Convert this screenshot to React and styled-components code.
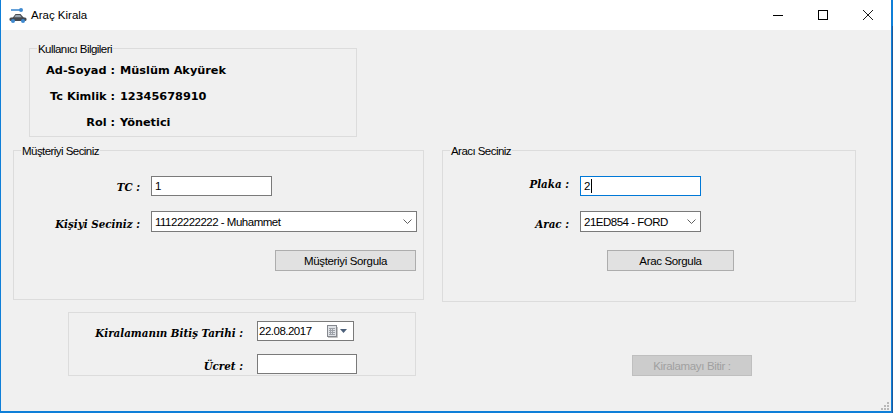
import styled, { createGlobalStyle } from "styled-components";

const GlobalStyle = createGlobalStyle`
  html, body {
    margin: 0;
    padding: 0;
    background: #f0f0f0;
  }
`;

/* ===== Window ===== */
const Window = styled.div`
  box-sizing: border-box;
  width: 893px;
  height: 413px;
  position: relative;
  display: flex;
  flex-direction: column;
  background: #f0f0f0;
  border-style: solid;
  border-color: #0f7fd8;
  border-width: 0 2px 2px 1px;
  font-family: "Liberation Sans", Arial, sans-serif;
  font-size: 11.5px;
  letter-spacing: -0.5px;
  color: #000;

  /* darker window edge showing behind the frame */
  &::after {
    content: "";
    position: absolute;
    top: 26px;
    right: -2px;
    bottom: -2px;
    width: 1px;
    background: #1c5a9c;
  }
`;

const TitleBar = styled.div`
  flex: none;
  height: 30px;
  display: flex;
  align-items: center;
  padding-left: 8px;
  background: #fff;
`;

const AppTitle = styled.span`
  margin-left: 4px;
  font-size: 11.5px;
  letter-spacing: 0;
`;

const WindowControls = styled.div`
  margin-left: auto;
  margin-right: 1px;
  display: flex;
`;

const ControlButton = styled.div`
  width: 45px;
  height: 30px;
  display: flex;
  align-items: center;
  justify-content: center;
`;

/* ===== Layout ===== */
const Content = styled.div`
  flex: 1;
  padding-top: 18px;
  display: flex;
  flex-direction: column;
`;

const Row = styled.div`
  display: flex;
  align-items: flex-start;
  margin-top: ${({ $top }) => $top || 0}px;
  padding-left: ${({ $left }) => $left || 0}px;
`;

const Group = styled.section`
  box-sizing: border-box;
  position: relative;
  flex: none;
  width: ${({ $width }) => $width}px;
  height: ${({ $height }) => $height}px;
  margin-left: ${({ $left }) => $left || 0}px;
  border: 1px solid #dcdcdc;
`;

const Legend = styled.span`
  position: absolute;
  top: -7px;
  left: 7px;
  padding: 0 1px;
  background: #f0f0f0;
  font-size: 11.5px;
  line-height: 14px;
  letter-spacing: -0.55px;
  white-space: nowrap;
`;

/* ===== User info ===== */
const InfoGrid = styled.div`
  display: grid;
  grid-template-columns: 85px auto;
  grid-auto-rows: 26px;
  column-gap: 5px;
  padding-top: 8px;
  align-items: center;
  font-family: "DejaVu Sans", Verdana, sans-serif;
  font-weight: 700;
  font-size: 11.3px;
  letter-spacing: 0;
`;

const InfoLabel = styled.div`
  text-align: right;
  white-space: nowrap;
`;

const InfoValue = styled.div`
  white-space: nowrap;
`;

/* ===== Forms ===== */
const FormGrid = styled.div`
  display: grid;
  grid-template-columns: ${({ $label }) => $label || 126}px ${({ $field }) => $field}px;
  column-gap: ${({ $labelGap }) => $labelGap || 11}px;
  row-gap: ${({ $gap }) => $gap || 15}px;
  padding-top: ${({ $top }) => $top}px;
  align-items: center;
`;

const FieldLabel = styled.label`
  margin-top: ${({ $shift }) => $shift || 0}px;
  font-family: "DejaVu Serif", serif;
  font-weight: 700;
  font-style: italic;
  font-size: 10.3px;
  letter-spacing: 0;
  text-align: right;
  white-space: nowrap;
`;

const TextBox = styled.div`
  box-sizing: border-box;
  width: ${({ $width }) => $width}px;
  height: 20px;
  display: flex;
  align-items: center;
  padding-left: 3px;
  background: #fff;
  border: 1px solid ${({ $focused }) => ($focused ? "#0078d7" : "#7a7a7a")};
`;

const Caret = styled.span`
  width: 1px;
  height: 14px;
  margin-left: 1px;
  background: #000;
`;

const ComboBox = styled(TextBox)`
  height: 21px;
  justify-content: space-between;
  padding-right: 4px;
`;

const DateBox = styled(TextBox)`
  padding-left: 1px;
  padding-right: 6px;
  justify-content: space-between;
`;

const DateIcons = styled.div`
  display: flex;
  align-items: center;
  gap: 2px;
`;

const Button = styled.div`
  box-sizing: border-box;
  flex: none;
  width: ${({ $width }) => $width}px;
  height: 21px;
  margin-left: ${({ $left }) => $left || 0}px;
  margin-top: ${({ $top }) => $top || 0}px;
  display: flex;
  align-items: center;
  justify-content: center;
  background: ${({ $disabled }) => ($disabled ? "#cccccc" : "#e1e1e1")};
  border: 1px solid ${({ $disabled }) => ($disabled ? "#bfbfbf" : "#adadad")};
  color: ${({ $disabled }) => ($disabled ? "#a0a0a0" : "#000")};
  letter-spacing: -0.35px;
`;

const ButtonCell = styled.div`
  grid-column: 2;
  margin-top: 3px;
`;

const ResizeGrip = styled.svg`
  position: absolute;
  right: 1px;
  bottom: 0;
`;

const Chevron = () => (
  <svg width="9" height="5" viewBox="0 0 9 5">
    <path d="M0.5 0.5 L4.5 4.5 L8.5 0.5" fill="none" stroke="#606060" />
  </svg>
);

const CarIcon = () => (
  <svg width="18" height="15" viewBox="0 0 18 15">
    <path d="M2 2 H11" stroke="#3f8ad0" strokeWidth="1.6" />
    <circle cx="12" cy="2" r="2" fill="#3f8ad0" />
    <path d="M3.5 10 L6.5 6 H11.5 L15 10 Z" fill="#4a4d52" />
    <path d="M6.8 7 H11 L12.8 9.5 H5 Z" fill="#9aa5b0" />
    <rect x="0.5" y="9.5" width="17" height="3.5" rx="1.5" fill="#45494f" />
    <circle cx="4" cy="13" r="2" fill="#3f8ad0" />
    <circle cx="14" cy="13" r="2" fill="#3f8ad0" />
  </svg>
);

const CalendarIcon = () => (
  <svg width="11" height="13" viewBox="0 0 11 13">
    <rect x="0.5" y="0.5" width="9" height="11" fill="#dfe2e6" stroke="#85888e" />
    <path d="M2 3.5 H8 M2 5.5 H8 M2 7.5 H8 M2 9.5 H8 M3.5 3 V10 M5.5 3 V10" stroke="#9da1a8" />
    <path d="M1 12.5 H10.5 V2" fill="none" stroke="#c4c4c4" />
  </svg>
);

const DropTriangle = () => (
  <svg width="7" height="4" viewBox="0 0 7 4">
    <path d="M0 0 H7 L3.5 4 Z" fill="#4c607a" />
  </svg>
);

export default function App() {
  return (
    <Window>
      <GlobalStyle />

      <TitleBar>
        <CarIcon />
        <AppTitle>Araç Kirala</AppTitle>
        <WindowControls>
          <ControlButton>
            <svg width="10" height="10" viewBox="0 0 10 10">
              <path d="M0 5.5 H10" stroke="#000" />
            </svg>
          </ControlButton>
          <ControlButton>
            <svg width="10" height="10" viewBox="0 0 10 10">
              <rect x="0.5" y="0.5" width="9" height="9" fill="none" stroke="#000" />
            </svg>
          </ControlButton>
          <ControlButton>
            <svg width="10" height="10" viewBox="0 0 10 10">
              <path d="M0 0 L10 10 M10 0 L0 10" stroke="#000" strokeWidth="0.9" />
            </svg>
          </ControlButton>
        </WindowControls>
      </TitleBar>

      <Content>
        <Row $left={28}>
          <Group $width={328} $height={89}>
            <Legend>Kullanıcı Bilgileri</Legend>
            <InfoGrid>
              <InfoLabel>Ad-Soyad :</InfoLabel>
              <InfoValue>Müslüm Akyürek</InfoValue>
              <InfoLabel>Tc Kimlik :</InfoLabel>
              <InfoValue>12345678910</InfoValue>
              <InfoLabel>Rol :</InfoLabel>
              <InfoValue>Yönetici</InfoValue>
            </InfoGrid>
          </Group>
        </Row>

        <Row $top={13} $left={12}>
          <Group $width={411} $height={150}>
            <Legend>Müşteriyi Seciniz</Legend>
            <FormGrid $field={266} $top={25}>
              <FieldLabel $shift={2}>TC :</FieldLabel>
              <TextBox $width={121}>1</TextBox>
              <FieldLabel $shift={5}>Kişiyi Seciniz :</FieldLabel>
              <ComboBox $width={266}>
                11122222222 - Muhammet
                <Chevron />
              </ComboBox>
              <ButtonCell>
                <Button $width={141} $left={124}>Müşteriyi Sorgula</Button>
              </ButtonCell>
            </FormGrid>
          </Group>

          <Group $width={414} $height={152} $left={18}>
            <Legend>Aracı Seciniz</Legend>
            <FormGrid $field={121} $top={25}>
              <FieldLabel $shift={-4}>Plaka :</FieldLabel>
              <TextBox $width={121} $focused>
                2
                <Caret />
              </TextBox>
              <FieldLabel $shift={5}>Arac :</FieldLabel>
              <ComboBox $width={121}>
                21ED854 - FORD
                <Chevron />
              </ComboBox>
              <ButtonCell>
                <Button $width={127} $left={27}>Arac Sorgula</Button>
              </ButtonCell>
            </FormGrid>
          </Group>
        </Row>

        <Row $top={10} $left={67}>
          <Group $width={348} $height={64}>
            <FormGrid $label={174} $labelGap={14} $field={100} $top={8} $gap={13}>
              <FieldLabel $shift={4}>Kiralamanın Bitiş Tarihi :</FieldLabel>
              <DateBox $width={97}>
                22.08.2017
                <DateIcons>
                  <CalendarIcon />
                  <DropTriangle />
                </DateIcons>
              </DateBox>
              <FieldLabel $shift={4}>Ücret :</FieldLabel>
              <TextBox $width={100} />
            </FormGrid>
          </Group>
          <Button $width={120} $left={216} $top={43} $disabled>
            Kiralamayı Bitir :
          </Button>
        </Row>
      </Content>

      <ResizeGrip width="10" height="10" viewBox="0 0 10 10">
        <path d="M7 1h2v2H7z M4 4h2v2H4z M7 4h2v2H7z M1 7h2v2H1z M4 7h2v2H4z M7 7h2v2H7z" fill="#b8b8b8" />
      </ResizeGrip>
    </Window>
  );
}
